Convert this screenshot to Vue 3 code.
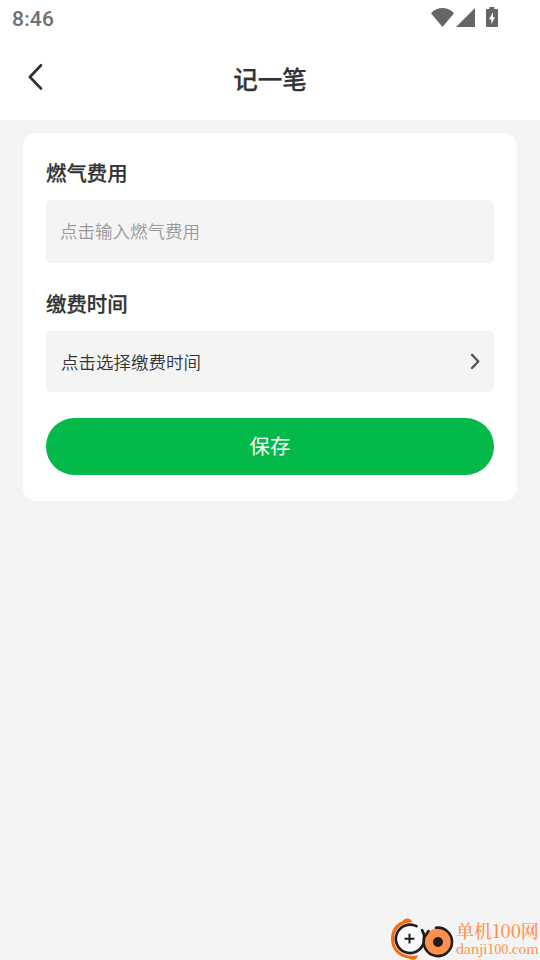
<script setup>
import { ref } from 'vue'

const fee = ref('')
</script>

<template>
  <div class="page">
    <header class="top">
      <div class="status">
        <span class="clock">8:46</span>
        <svg class="indicators" width="68" height="22" viewBox="0 0 68 22" fill="#666">
          <path d="M1 6.2C7.6-.6 17.4-.6 24 6.2L12.5 20Z" />
          <path d="M45 1V20H26Z" />
          <path fill-rule="evenodd" d="M59.300 0h5v2H67q1 0 1 1V19q0 1-1 1H57q-1 0-1-1V3q0-1 1-1h2.300ZM63 5.300 59 12.200h2.300V17L65 10.200h-2Z" />
        </svg>
      </div>
      <div class="navbar">
        <button class="back" aria-label="返回">
          <svg width="16" height="28" viewBox="0 0 16 28" fill="none" stroke="#333" stroke-width="2.7" stroke-linecap="round" stroke-linejoin="round">
            <path d="M13 2.300 1.900 14 13 25.500" />
          </svg>
        </button>
        <h1>记一笔</h1>
      </div>
    </header>

    <main class="card">
      <label class="label" for="fee">燃气费用</label>
      <input id="fee" v-model="fee" class="field input" placeholder="点击输入燃气费用" />
      <div class="label second">缴费时间</div>
      <div class="field picker">
        <span>点击选择缴费时间</span>
        <svg width="10" height="18" viewBox="0 0 10 18" fill="none" stroke="#555" stroke-width="2.4" stroke-linecap="round" stroke-linejoin="round">
          <path d="M2 1.800 8.300 8.500 2 15" />
        </svg>
      </div>
      <button class="save">保存</button>
    </main>

    <div class="watermark">
      <svg width="66" height="44" viewBox="0 0 66 44" fill="none">
        <path d="M22.500 6C20 .8 15 1.800 12 5.500C4 8.500 1 16 1 23C1 34 9 41.500 19 42.500C23 45.500 27.500 43 28 39.500C16 41.500 4 36 4 23C4 13 12 6.500 22.500 6Z" fill="#f96b09" />
        <circle cx="19.500" cy="23" r="13.500" fill="#fafafa" />
        <path d="M26.500 10.200A14.200 14.200 0 1 0 33.500 27.500" stroke="#211b1c" stroke-width="2.600" stroke-linecap="round" />
        <path d="M32 14Q34.500 18 34 23" stroke="#211b1c" stroke-width="2.600" stroke-linecap="round" />
        <path d="M19.500 17.800V27.600M14.600 22.700H24.400" stroke="#211b1c" stroke-width="2" />
        <circle cx="48" cy="25.700" r="13.500" fill="#ff914d" />
        <path d="M46 11.800A14.200 14.200 0 1 1 34.500 21L38.500 15" stroke="#211b1c" stroke-width="2.600" stroke-linecap="round" />
        <circle cx="48" cy="26" r="5" fill="#211b1c" />
      </svg>
      <div class="brand">
        <span class="name">单机100网</span>
        <span class="domain">danji100.com</span>
      </div>
    </div>
  </div>
</template>

<style>
body {
  background: #f4f4f4;
}
</style>

<style scoped>
.page {
  position: relative;
  height: 960px;
  overflow: hidden;
  background: #f4f4f4;
  color: #333;
  font-family: "Noto Sans CJK SC", sans-serif;
}
.top {
  height: 120px;
  background: #fff;
}
.status {
  display: flex;
  justify-content: space-between;
  align-items: flex-start;
  height: 38px;
  padding: 7px 42px 0 12px;
  box-sizing: border-box;
}
.clock {
  color: #707070;
  font: 500 21px/24px Roboto, sans-serif;
  letter-spacing: 0.2px;
}
.navbar {
  display: grid;
  grid-template-columns: 60px 1fr 60px;
  align-items: center;
  height: 82px;
}
.back {
  display: flex;
  margin: 0 0 4px 28px;
  padding: 0;
  border: 0;
  background: none;
}
h1 {
  margin: 0;
  text-align: center;
  font-size: 24.5px;
  line-height: 36px;
  font-weight: 500;
  -webkit-text-stroke: 0.25px #333;
}
.card {
  display: flex;
  flex-direction: column;
  box-sizing: border-box;
  height: 367.5px;
  margin: 13px 23px 0;
  padding: 24px 23px 0;
  border-radius: 13px;
  background: #fff;
}
.label {
  font-size: 20.4px;
  line-height: 30px;
  font-weight: 500;
  -webkit-text-stroke: 0.25px #333;
}
.second {
  margin-top: 25px;
}
.field {
  box-sizing: border-box;
  border: 0;
  border-radius: 5px;
  background: #f4f4f4;
  font-family: inherit;
  font-size: 17.5px;
  font-weight: 350;
}
.input {
  height: 63px;
  margin-top: 13px;
  padding: 0 14px 2px;
}
.input::placeholder {
  color: #999;
  opacity: 1;
}
.picker {
  display: flex;
  align-items: center;
  justify-content: space-between;
  height: 61px;
  margin-top: 13px;
  padding: 0 14px 0 15px;
}
.save {
  height: 57px;
  margin-top: 26px;
  padding: 0 0 3px;
  border: 0;
  border-radius: 29px;
  background: #02b94a;
  color: #fff;
  font-family: inherit;
  font-size: 20.4px;
}
.watermark {
  position: absolute;
  right: 2px;
  bottom: 0;
  display: flex;
  width: 148px;
  height: 44px;
}
.watermark svg {
  flex: none;
}
.brand {
  display: flex;
  flex-direction: column;
  color: #ff914d;
  font-family: "Noto Serif CJK SC", "Noto Sans CJK SC", serif;
  font-weight: 500;
  white-space: nowrap;
}
.name {
  padding-top: 3px;
  font-size: 18px;
  line-height: 22px;
}
.domain {
  font-size: 13px;
  line-height: 16px;
  letter-spacing: -0.3px;
}
</style>
